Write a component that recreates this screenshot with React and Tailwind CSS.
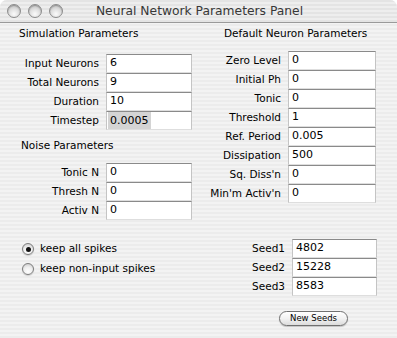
import React from "react";

const font = { fontFamily: '"DejaVu Sans", "Liberation Sans", sans-serif' };

const simFields = [
  ["Input Neurons", "6"],
  ["Total Neurons", "9"],
  ["Duration", "10"],
  ["Timestep", "0.0005", true],
];

const noiseFields = [
  ["Tonic N", "0"],
  ["Thresh N", "0"],
  ["Activ N", "0"],
];

const neuronFields = [
  ["Zero Level", "0"],
  ["Initial Ph", "0"],
  ["Tonic", "0"],
  ["Threshold", "1"],
  ["Ref. Period", "0.005"],
  ["Dissipation", "500"],
  ["Sq. Diss'n", "0"],
  ["Min'm Activ'n", "0"],
];

const seeds = [
  ["Seed1", "4802"],
  ["Seed2", "15228"],
  ["Seed3", "8583"],
];

function Field({ label, value, selected, labelW, boxW }) {
  return (
    <div className="flex items-center h-[19px]">
      <div className={`${labelW} text-right text-[10.5px] leading-[19px] text-black shrink-0`}>{label}</div>
      <div
        className={`${boxW} ml-[7px] h-[19px] bg-white border-t border-t-[#8a8a8a] border-x border-x-[#c4c4c4] border-b border-b-[#dedede] flex items-center text-[11px] text-black shrink-0 ${
          selected ? "pl-[1px]" : "pl-[3px]"
        }`}
      >
        {selected ? <span className="bg-[#d4d4d4] px-[2px] leading-[17px]">{value}</span> : value}
      </div>
    </div>
  );
}

function Light() {
  return (
    <div className="w-[14px] h-[14px] rounded-full border border-[#8c8c8c] bg-[radial-gradient(circle_at_50%_75%,#fbfbfb_0%,#e0e0e0_45%,#b4b4b4_100%)] shadow-[inset_0_1px_1px_rgba(0,0,0,0.25)]" />
  );
}

function Radio({ checked, label }) {
  return (
    <div className="flex items-center h-[20px]">
      <div className="w-[12px] h-[12px] rounded-full border border-[#7d7d7d] bg-[radial-gradient(circle_at_50%_75%,#ffffff_0%,#eeeeee_50%,#c2c2c2_100%)] flex items-center justify-center shadow-[0_1px_1px_rgba(0,0,0,0.15)]">
        {checked && <div className="w-[5px] h-[5px] rounded-full bg-[#111]" />}
      </div>
      <span className="ml-[6px] text-[10.5px] text-black">{label}</span>
    </div>
  );
}

export default function App() {
  return (
    <div className="w-[397px] h-[338px] bg-white" style={font}>
      <div className="w-[397px] h-[338px] rounded-t-[7px] overflow-hidden flex flex-col bg-[image:repeating-linear-gradient(180deg,#ececec_0px,#ececec_2px,#f3f3f3_2px,#f3f3f3_4px)]">
        {/* Title bar */}
        <div className="relative h-[23px] shrink-0 border-b border-b-[#9a9a9a] bg-[image:repeating-linear-gradient(180deg,#e4e4e4_0px,#e4e4e4_2px,#eeeeee_2px,#eeeeee_4px)] flex items-center">
          <div className="flex gap-[7px] pl-[7px]">
            <Light />
            <Light />
            <Light />
          </div>
          <div className="absolute left-0 right-0 top-0 h-[22px] flex items-center justify-center pl-[2px] text-[12.3px] text-[#383838] pointer-events-none">
            Neural Network Parameters Panel
          </div>
        </div>

        {/* Body */}
        <div className="flex flex-1">
          {/* Left column */}
          <div className="w-[200px] flex flex-col">
            <div className="pl-[19px] mt-[4px] text-[10.5px] leading-[13px] text-black">Simulation Parameters</div>
            <div className="mt-[14px] flex flex-col">
              {simFields.map(([l, v, s]) => (
                <Field key={l} label={l} value={v} selected={s} labelW="w-[99px]" boxW="w-[86px]" />
              ))}
            </div>
            <div className="pl-[21px] mt-[9px] text-[10.5px] leading-[13px] text-black">Noise Parameters</div>
            <div className="mt-[11px] flex flex-col">
              {noiseFields.map(([l, v]) => (
                <Field key={l} label={l} value={v} labelW="w-[99px]" boxW="w-[86px]" />
              ))}
            </div>
            <div className="mt-[19px] pl-[22px] flex flex-col">
              <Radio checked label="keep all spikes" />
              <Radio label="keep non-input spikes" />
            </div>
          </div>

          {/* Right column */}
          <div className="flex-1 flex flex-col">
            <div className="pl-[24px] mt-[4px] text-[10.5px] leading-[13px] text-black">Default Neuron Parameters</div>
            <div className="mt-[11px] flex flex-col">
              {neuronFields.map(([l, v]) => (
                <Field key={l} label={l} value={v} labelW="w-[81px]" boxW="w-[88px]" />
              ))}
            </div>
            <div className="mt-[36px] flex flex-col">
              {seeds.map(([l, v]) => (
                <Field key={l} label={l} value={v} labelW="w-[85px]" boxW="w-[85px]" />
              ))}
            </div>
            <div className="mt-[8px] ml-[79px]">
              <button className="w-[69px] h-[15px] rounded-full border border-[#707070] bg-[linear-gradient(180deg,#ffffff_0%,#f2f2f2_50%,#dcdcdc_100%)] text-[8.5px] leading-[13px] text-black shadow-[0_1px_1px_rgba(0,0,0,0.2)]">
                New Seeds
              </button>
            </div>
          </div>
        </div>
      </div>
    </div>
  );
}
